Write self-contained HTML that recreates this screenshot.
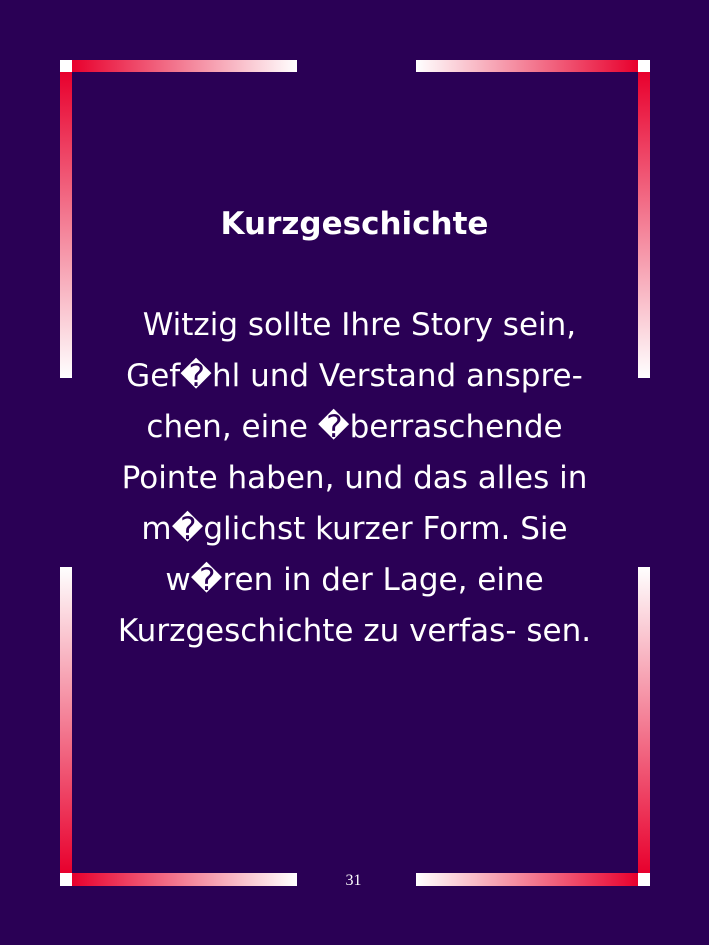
<!DOCTYPE html>
<html><head><meta charset="utf-8"><style>
body{margin:0;width:709px;height:945px;background:#2a0055;position:relative;overflow:hidden;font-family:"DejaVu Sans","Liberation Sans",sans-serif;color:#fff}
.b{position:absolute}
.w{background:#fff}
.t{position:absolute;left:0;width:709px;text-align:center}
.l{position:absolute;left:0;width:709px;text-align:center;font-size:31px;line-height:51px}
</style></head><body>
<div class="b w" style="left:60px;top:60px;width:12px;height:12px"></div>
<div class="b" style="left:72px;top:60px;width:225px;height:12px;background:linear-gradient(to right,#e8002d,#fff)"></div>
<div class="b" style="left:60px;top:72px;width:12px;height:306px;background:linear-gradient(to bottom,#e8002d,#fff)"></div>
<div class="b w" style="left:638px;top:60px;width:12px;height:12px"></div>
<div class="b" style="left:416px;top:60px;width:222px;height:12px;background:linear-gradient(to right,#fff,#e8002d)"></div>
<div class="b" style="left:638px;top:72px;width:12px;height:306px;background:linear-gradient(to bottom,#e8002d,#fff)"></div>
<div class="b" style="left:60px;top:567px;width:12px;height:306px;background:linear-gradient(to bottom,#fff,#e8002d)"></div>
<div class="b w" style="left:60px;top:873px;width:12px;height:13px"></div>
<div class="b" style="left:72px;top:873px;width:225px;height:13px;background:linear-gradient(to right,#e8002d,#fff)"></div>
<div class="b" style="left:638px;top:567px;width:12px;height:306px;background:linear-gradient(to bottom,#fff,#e8002d)"></div>
<div class="b w" style="left:638px;top:873px;width:12px;height:13px"></div>
<div class="b" style="left:416px;top:873px;width:222px;height:13px;background:linear-gradient(to right,#fff,#e8002d)"></div>
<div class="t" style="top:204px;font-size:31px;font-weight:bold;line-height:40px">Kurzgeschichte</div>
<div class="l" style="top:300px">&nbsp;Witzig sollte Ihre Story sein,</div>
<div class="l" style="top:351px">Gef�hl und Verstand anspre-</div>
<div class="l" style="top:402px">chen, eine �berraschende</div>
<div class="l" style="top:453px">Pointe haben, und das alles in</div>
<div class="l" style="top:504px">m�glichst kurzer Form. Sie</div>
<div class="l" style="top:555px">w�ren in der Lage, eine</div>
<div class="l" style="top:606px">Kurzgeschichte zu verfas- sen.</div>
<div class="t" style="top:871px;font-family:'Liberation Serif',serif;font-size:16px;line-height:20px;left:-1px">31</div>
</body></html>
